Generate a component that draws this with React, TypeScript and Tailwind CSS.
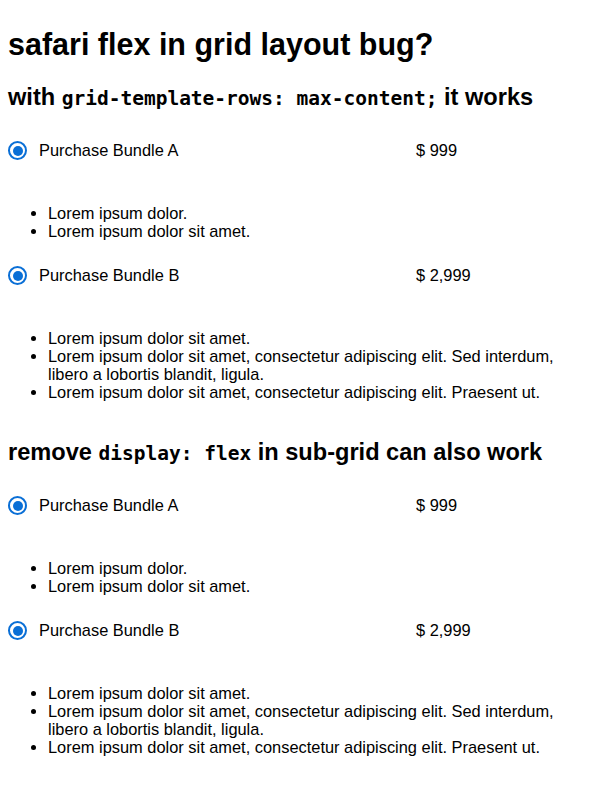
const bundlesShort = ["Lorem ipsum dolor.", "Lorem ipsum dolor sit amet."];
const bundlesLong = [
  "Lorem ipsum dolor sit amet.",
  "Lorem ipsum dolor sit amet, consectetur adipiscing elit. Sed interdum, libero a lobortis blandit, ligula.",
  "Lorem ipsum dolor sit amet, consectetur adipiscing elit. Praesent ut.",
];

function Radio() {
  return (
    <span className="flex h-[19px] w-[19px] shrink-0 items-center justify-center rounded-full border-2 border-[#0a6fd6] bg-white">
      <span className="h-[10px] w-[10px] rounded-full bg-[#0a6fd6]" />
    </span>
  );
}

function Bundle({ name, price, items }: { name: string; price: string; items: string[] }) {
  return (
    <div className="grid grid-cols-[408px_1fr]">
      <label className="flex h-[19px] items-center gap-3">
        <Radio />
        <span>{name}</span>
      </label>
      <div className="flex h-[19px] items-center">{price}</div>
      <ul className="col-span-2 mt-[44px] mb-[26px] list-disc pl-10 leading-[18px]">
        {items.map((t) => (
          <li key={t}>{t}</li>
        ))}
      </ul>
    </div>
  );
}

function Section() {
  return (
    <div>
      <Bundle name="Purchase Bundle A" price="$ 999" items={bundlesShort} />
      <Bundle name="Purchase Bundle B" price="$ 2,999" items={bundlesLong} />
    </div>
  );
}

export default function App() {
  const mono = "font-['DejaVu_Sans_Mono',monospace] text-[19.5px]";
  return (
    <div className="min-h-screen bg-white px-2 font-['Liberation_Sans',Arial,sans-serif] text-[16.4px] text-black">
      {/* Title */}
      <h1 className="pt-[26px] text-[30.5px] leading-[36px] font-bold">safari flex in grid layout bug?</h1>

      {/* With max-content rows */}
      <h2 className="mt-[21px] mb-[28px] text-[23.6px] leading-[28px] font-bold">
        with <code className={mono}>grid-template-rows: max-content;</code> it works
      </h2>
      <Section />

      {/* Without display flex */}
      <h2 className="mt-[11px] mb-[28px] text-[23.6px] leading-[28px] font-bold">
        remove <code className={mono}>display: flex</code> in sub-grid can also work
      </h2>
      <Section />
    </div>
  );
}
